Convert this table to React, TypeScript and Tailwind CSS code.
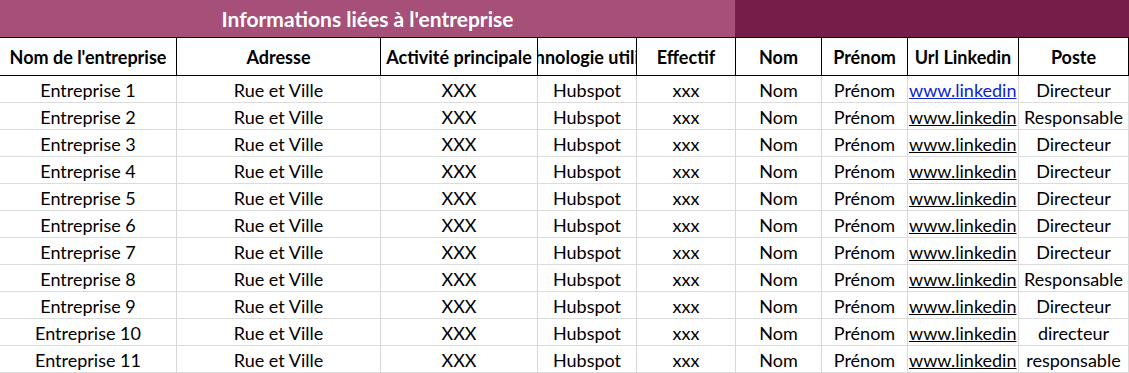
import React from 'react';

const cols = [
  { label: "Nom de l'entreprise", w: 'w-[177px]' },
  { label: 'Adresse', w: 'w-[204px]' },
  { label: 'Activité principale', w: 'w-[157px]' },
  { label: 'Technologie utilisée', w: 'w-[99px]' },
  { label: 'Effectif', w: 'w-[99px]' },
  { label: 'Nom', w: 'w-[86px]' },
  { label: 'Prénom', w: 'w-[86px]' },
  { label: 'Url Linkedin', w: 'w-[111px]' },
  { label: 'Poste', w: 'w-[110px]' },
];

const postes = [
  'Directeur',
  'Responsable',
  'Directeur',
  'Directeur',
  'Directeur',
  'Directeur',
  'Directeur',
  'Responsable',
  'Directeur',
  'directeur',
  'responsable',
];

function Cell({ w, children, left }: { w: string; children: React.ReactNode; left?: boolean }) {
  return (
    <div
      className={`${w} shrink-0 h-full flex items-center pt-[3px] overflow-hidden whitespace-nowrap border-r border-[#d9d9d9] ${
        left ? 'justify-start pl-[1px]' : 'justify-center'
      }`}
    >
      {children}
    </div>
  );
}

export default function App() {
  return (
    <div className="w-[1129px] h-[373px] overflow-hidden bg-white text-black font-['Lato','Open_Sans',sans-serif]">
      {/* Section banner */}
      <div className="flex h-[37px]">
        <div className="w-[735px] shrink-0 bg-[#a54f79] flex items-center justify-center text-white font-bold text-[21px]">
          Informations liées à l'entreprise
        </div>
        <div className="flex-1 bg-[#751e4a]" />
      </div>

      {/* Column headers */}
      <div className="flex h-[39px] border-y border-black">
        {cols.map((c) => (
          <div
            key={c.label}
            className={`${c.w} shrink-0 h-full flex items-center justify-center pt-[2px] overflow-hidden whitespace-nowrap border-r border-black font-bold text-[18px]`}
          >
            {c.label}
          </div>
        ))}
      </div>

      {/* Rows */}
      {postes.map((poste, i) => (
        <div key={i} className="flex h-[27px] border-b border-[#dcdcdc] text-[18px]">
          <Cell w="w-[177px]">Entreprise {i + 1}</Cell>
          <Cell w="w-[204px]">Rue et Ville</Cell>
          <Cell w="w-[157px]">XXX</Cell>
          <Cell w="w-[99px]">Hubspot</Cell>
          <Cell w="w-[99px]">xxx</Cell>
          <Cell w="w-[86px]">Nom</Cell>
          <Cell w="w-[86px]">Prénom</Cell>
          <Cell w="w-[111px]" left>
            <span className={`underline ${i === 0 ? 'text-[#0b22d6]' : 'text-black'}`}>www.linkedin</span>
          </Cell>
          <Cell w="w-[110px]">{poste}</Cell>
        </div>
      ))}
    </div>
  );
}
